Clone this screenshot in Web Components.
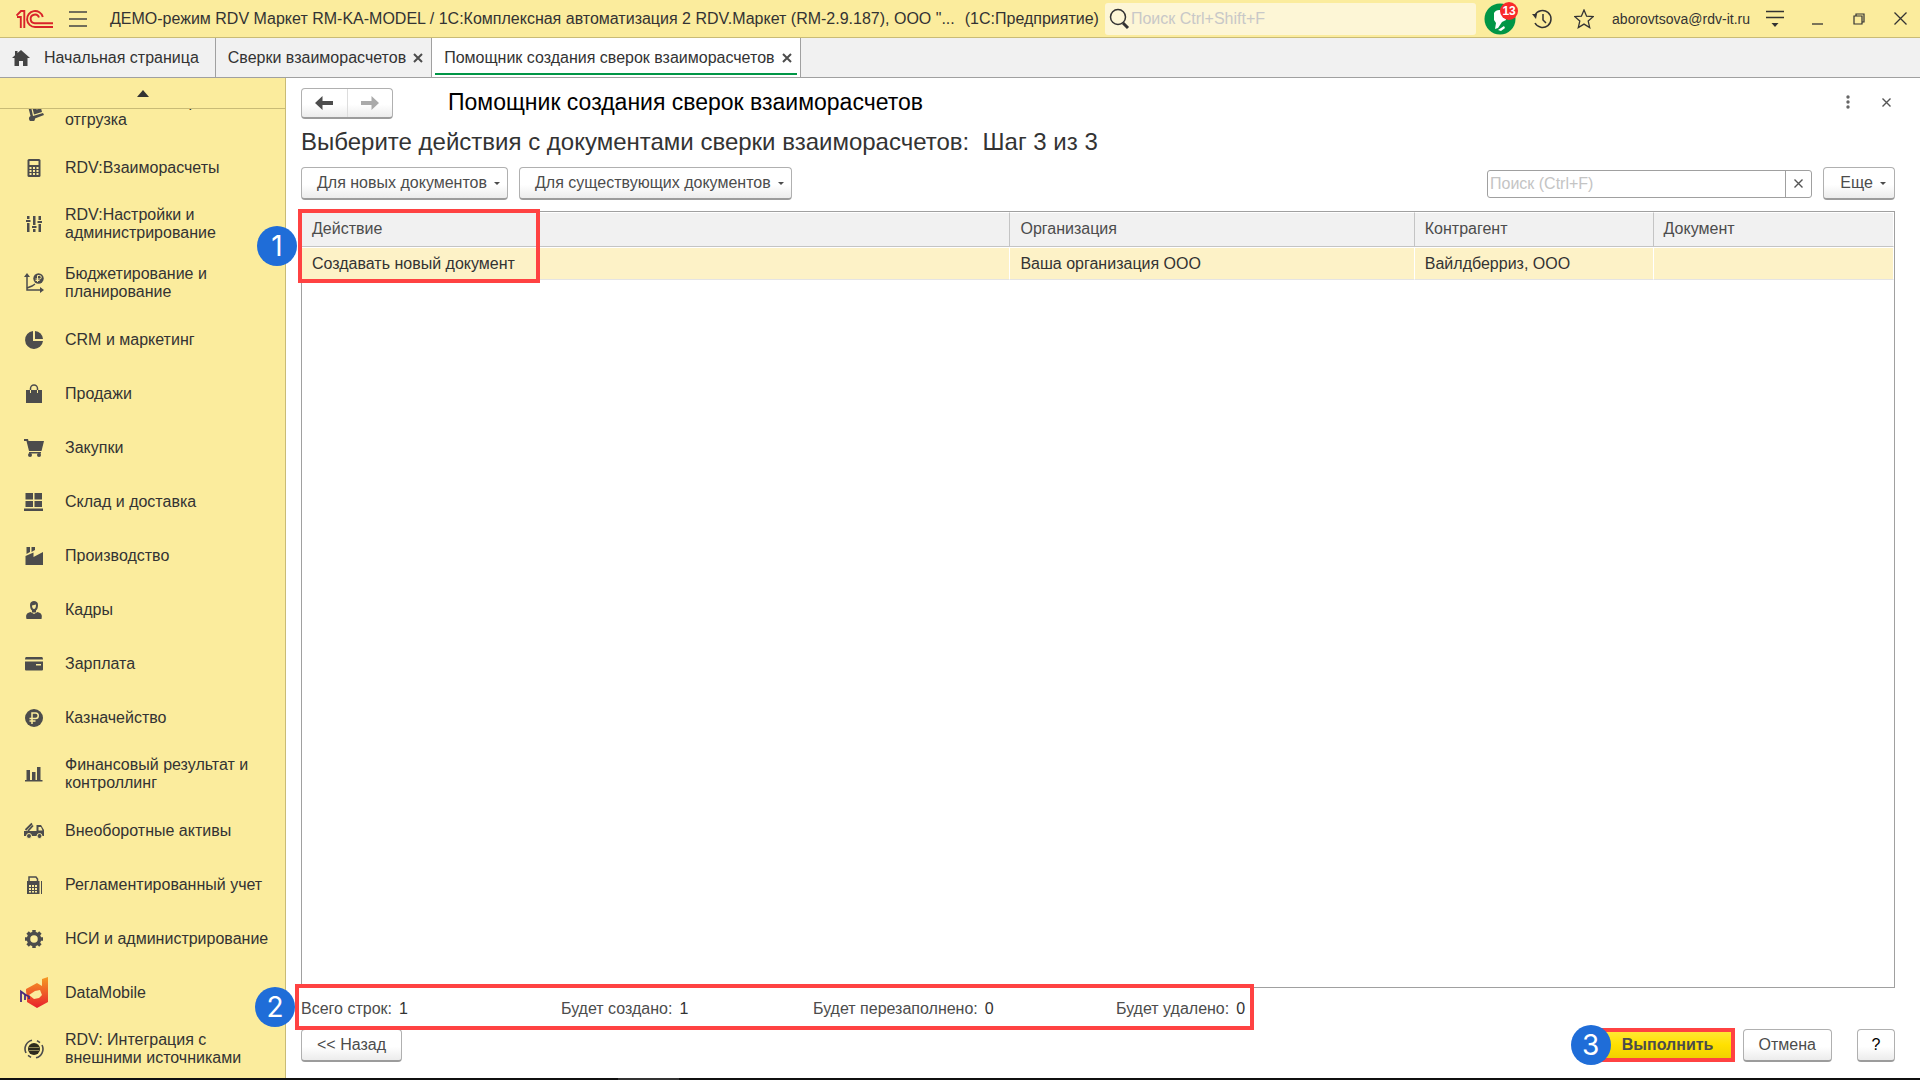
<!DOCTYPE html>
<html lang="ru">
<head>
<meta charset="utf-8">
<title>Помощник создания сверок взаиморасчетов</title>
<style>
  :root {
    --brand: #fbec9d;
    --brand-line: #c9bb76;
    --line: #a0a0a0;
    --text: #333;
    --muted: #4c4c4c;
    --accent: #009646;
    --mark: #ff4242;
    --badge: #1f6dd8;
  }
  * { box-sizing: border-box; }
  body {
    margin: 0;
    height: 100vh;
    display: flex;
    flex-direction: column;
    overflow: hidden;
    background: #fff;
    color: var(--text);
    font: 16px/18px "Liberation Sans", Arial, sans-serif;
  }
  main {
    flex: 1;
    min-height: 0;
    display: flex;
  }
  section-nav { flex: none; }
  reconcile-form { flex: 1; min-width: 0; }
</style>
</head>
<body>
  <app-header>
    <span slot="title">ДЕМО-режим RDV Маркет RM-KA-MODEL / 1С:Комплексная автоматизация 2 RDV.Маркет (RM-2.9.187), ООО "...</span>
    <span slot="product">(1С:Предприятие)</span>
    <span slot="user">aborovtsova@rdv-it.ru</span>
  </app-header>

  <app-tabs>
    <app-tab icon="home">Начальная страница</app-tab>
    <app-tab closable>Сверки взаиморасчетов</app-tab>
    <app-tab closable active>Помощник создания сверок взаиморасчетов</app-tab>
  </app-tabs>

  <main>
    <section-nav>
      <nav-item icon="trolley">RDV:Заказ и сборка отгрузка</nav-item>
      <nav-item icon="calc">RDV:Взаиморасчеты</nav-item>
      <nav-item icon="sliders">RDV:Настройки и администрирование</nav-item>
      <nav-item icon="budget">Бюджетирование и планирование</nav-item>
      <nav-item icon="pie">CRM и маркетинг</nav-item>
      <nav-item icon="bag">Продажи</nav-item>
      <nav-item icon="cart">Закупки</nav-item>
      <nav-item icon="store">Склад и доставка</nav-item>
      <nav-item icon="factory">Производство</nav-item>
      <nav-item icon="person">Кадры</nav-item>
      <nav-item icon="card">Зарплата</nav-item>
      <nav-item icon="ruble">Казначейство</nav-item>
      <nav-item icon="bars">Финансовый результат и контроллинг</nav-item>
      <nav-item icon="truck">Внеоборотные активы</nav-item>
      <nav-item icon="register">Регламентированный учет</nav-item>
      <nav-item icon="gear">НСИ и администрирование</nav-item>
      <nav-item icon="datamobile">DataMobile</nav-item>
      <nav-item icon="sync">RDV: Интеграция с внешними источниками</nav-item>
    </section-nav>
    <reconcile-form></reconcile-form>
  </main>

  <task-strip></task-strip>

<script>
const ICONS = {
  logo: [38, 20, `<g fill="none" stroke="#d9232a" stroke-width="1.900">
    <path d="M.5 6.500 5 2H8.300v17"/><path d="M1 8h3.800v11"/>
    <path d="M26.800 8A8 8 0 1 0 19 18h18"/><path d="M23 8.500A4.300 4.300 0 1 0 19 14.200h18"/></g>`],
  burger: [18, 18, `<path d="M0 2h18M0 9h18M0 16h18" stroke="#444" stroke-width="1.500"/>`],
  search: [22, 24, `<circle cx="9" cy="10" r="7.500" fill="none" stroke="#333" stroke-width="1.500"/><path d="M14 16l5 5" stroke="#333" stroke-width="3"/>`],
  bell: [32, 32, `<circle cx="16" cy="16" r="15.500" fill="#009646"/>
    <path d="M10 10c2-4 8-4 12 0v7l-4 2-4 6-3 1 1-6-2-3z" fill="#fff"/><path d="M14 27l6-4 1 2-4 3z" fill="#fff"/>`],
  history: [20, 20, `<g fill="none" stroke="#333" stroke-width="1.500"><path d="M3 6a8.500 8.500 0 1 1 0 8"/><path d="M11 5v6l3 3"/></g><path d="M0 5l5 0-1 5z" fill="#333"/>`],
  star: [20, 20, `<path d="M10 1l2.600 6.200 6.600.5-5 4.400 1.500 6.500L10 15.100l-5.700 3.500 1.500-6.500-5-4.400 6.600-.5z" fill="none" stroke="#333" stroke-width="1.300"/>`],
  service: [18, 18, `<path d="M0 1.500h18M0 7.500h18" stroke="#333" stroke-width="1.500"/><path d="M5.500 13h7L9 17z" fill="#333"/>`],
  minimize: [12, 12, `<path d="M1 11h11" stroke="#333" stroke-width="1.300"/>`],
  restore: [12, 12, `<g fill="none" stroke="#333" stroke-width="1.200"><path d="M1 3h8v8H1z"/><path d="M3 3V1h8v8H9"/></g>`],
  quit: [13, 13, `<path d="M.5.5l12 12M12.500.5l-12 12" stroke="#333" stroke-width="1.300"/>`],
  home: [18, 16, `<path d="M9 0l9 8h-2.500v8H11v-5H7v5H2.500V8H0l3-2.700V1h2.500v2z" fill="#444"/>`],
  close: [10, 10, `<path d="M1 1l8 8M9 1l-8 8" stroke="#4c4c4c" stroke-width="2"/>`],
  thin: [9, 9, `<path d="M.5.5l8 8M8.500.5l-8 8" stroke="#555" stroke-width="1.400"/>`],
  up: [12, 7, `<path d="M6 0l6 7H0z" fill="#333"/>`],
  caret: [6, 3, `<path d="M0 0h6L3 3z" fill="#4c4c4c"/>`],
  dots: [4, 14, `<g fill="#666"><circle cx="2" cy="2" r="1.700"/><circle cx="2" cy="7" r="1.700"/><circle cx="2" cy="12" r="1.700"/></g>`],
  back: [18, 14, `<path d="M7.500 0v5H18v4H7.500v5L0 7z" fill="#4c4c4c"/>`],
  forward: [18, 14, `<path d="M10.500 0v5H0v4h10.500v5L18 7z" fill="#aaa"/>`],

  trolley: [20, 20, `<path d="M3 1h3l3 14 10-3 1 2-9 3.500a3 3 0 1 1-4.500-2.500z" fill="#4c4c4c"/><path d="M8 5l8-2 2 8-8 2.500z" fill="#4c4c4c"/><path d="M11.500 4.500l1 4 2-.5-1-4" fill="#fbec9d"/>`],
  calc: [20, 20, `<path d="M5 1h10a1.500 1.500 0 0 1 1.500 1.500v15A1.500 1.500 0 0 1 15 19H5a1.500 1.500 0 0 1-1.500-1.500v-15A1.500 1.500 0 0 1 5 1z" fill="#4c4c4c"/>
    <path d="M5.500 3h9v4h-9zM5.500 9h2v2h-2zM9 9h2v2H9zM12.500 9h2v2h-2zM5.500 12h2v2h-2zM9 12h2v2H9zM12.500 12h2v2h-2zM5.500 15h2v2h-2zM9 15h2v2H9zM12.500 15h2v2h-2z" fill="#fbec9d"/>`],
  sliders: [20, 20, `<path d="M3 2h2.500v3H3zM3 9h2.500v9H3zM2 6h4.500v2H2zM9 2h2.500v9H9zM9 15h2.500v3H9zM8 12h4.500v2H8zM14.500 2H17v4h-2.500zM14.500 10H17v8h-2.500zM13.500 7H18v2h-4.500z" fill="#4c4c4c"/>`],
  budget: [20, 20, `<g fill="none" stroke="#4c4c4c" stroke-width="1.500"><path d="M3 2v15h15"/><path d="M3 15l5-2 3-2"/></g>
    <circle cx="14.500" cy="5.500" r="5.200" fill="#4c4c4c"/><path d="M13.500 9V2.500h2a1.600 1.600 0 0 1 0 3.500h-4M11.500 7.500h4" fill="none" stroke="#fbec9d"/>
    <path d="M0 4l3-4 3 4zM16 14l4 3-4 3z" fill="#4c4c4c"/>`],
  pie: [20, 20, `<path d="M9 1v10h10A9 9 0 1 1 9 1z" fill="#4c4c4c"/><path d="M11 1a8.500 8.500 0 0 1 8 8h-8z" fill="#4c4c4c"/>`],
  bag: [20, 20, `<path d="M2 6h16v13H2z" fill="#4c4c4c"/><path d="M6.500 9V4.500a3.500 3.500 0 0 1 7 0V9" fill="none" stroke="#4c4c4c" stroke-width="1.500"/>
    <path d="M6.500 6v3M13.500 6v3" stroke="#fbec9d"/>`],
  cart: [20, 20, `<path d="M0 1h4l.5 2H20l-2.500 10H5L2.500 3H0zM5 14h12v1.500H5z" fill="#4c4c4c"/><circle cx="6" cy="17" r="2" fill="#4c4c4c"/><circle cx="15" cy="17" r="2" fill="#4c4c4c"/>`],
  store: [20, 20, `<path d="M1.500 1H9v6.500H1.500zM10.500 1H18v6.500h-7.500zM1.500 9H9v6H1.500zM10.500 9H18v6h-7.500zM0 16.500h19V19H0z" fill="#4c4c4c"/>`],
  factory: [20, 20, `<path d="M1.500 10l8-3.500V11L19 6v13H1.500z" fill="#4c4c4c"/><path d="M2.500 1h3.500v5l-3.500 2zM7.500 1H11v3l-3.500 2z" fill="#4c4c4c"/>`],
  person: [20, 20, `<path d="M6 5C6 2 8 1 10 1s4 1 4 4-1 5-2 5.500v2H8v-2C7 10 6 8 6 5z" fill="#4c4c4c"/><path d="M8 5.500l4-1c0 3.500-1 4.500-2 4.500s-2-1-2-3.500z" fill="#fbec9d"/>
    <path d="M2.500 19c-1-4 0-6 4-7l3.500 2 3.500-2c4 1 5 3 4 7z" fill="#4c4c4c"/>`],
  card: [20, 20, `<path d="M2 3h16q1 0 1 2.500H1Q1 3 2 3zM1 7.500h18v8q0 1-1 1H2q-1 0-1-1z" fill="#4c4c4c"/><path d="M12 10h5v1.500h-5z" fill="#fbec9d"/>`],
  ruble: [20, 20, `<circle cx="10" cy="10" r="9" fill="#4c4c4c"/><path d="M8 16V5h3.500a2.700 2.700 0 0 1 0 5.500H5.500M5.500 13h6" fill="none" stroke="#fbec9d" stroke-width="1.500"/>`],
  bars: [20, 20, `<path d="M2.500 6H6v10H2.500zM8 8h3.500v8H8zM13 3h3.500v13H13zM1 16h17.500v1.500H1z" fill="#4c4c4c"/>`],
  truck: [20, 20, `<g fill="#4c4c4c"><path d="M0 10h20v5H0z"/><path d="M12.500 4H17l3 5v2h-7.500z"/></g>
    <path d="M1.500 9L8 2.500M4 10l5-5.500" stroke="#4c4c4c" stroke-width="1.800"/><path d="M14.500 6H17l1.500 3.500h-4z" fill="#fbec9d"/>
    <g fill="#4c4c4c" stroke="#fbec9d"><circle cx="5" cy="15" r="2.500"/><circle cx="15.500" cy="15" r="2.500"/></g>`],
  register: [20, 20, `<path d="M3 6h12.500v13H3z" fill="#4c4c4c"/><path d="M5 6V2h7l1.500 2v2" fill="none" stroke="#4c4c4c" stroke-width="1.500"/><path d="M17.500 6v13" stroke="#4c4c4c"/>
    <path d="M5 10h2v2H5zM8 10h2v2H8zM11 10h2v2h-2zM5 13h2v2H5zM8 13h2v2H8zM11 13h2v2h-2zM5 16h2v1.500H5zM8 16h2v1.500H8zM11 16h2v1.500h-2z" fill="#fbec9d"/>`],
  gear: [20, 20, `<circle cx="10" cy="10" r="5.500" fill="none" stroke="#4c4c4c" stroke-width="3.500"/>
    <path d="M10 1v3M10 16v3M1 10h3M16 10h3M3.600 3.600l2 2M14.400 14.400l2 2M3.600 16.400l2-2M14.400 5.600l2-2" stroke="#4c4c4c" stroke-width="3.500"/>`],
  datamobile: [28, 32, `<defs><linearGradient id="dm" x1="0" y1="0" x2="0" y2="1"><stop offset="0" stop-color="#f59a23"/><stop offset="1" stop-color="#e8202c"/></linearGradient></defs>
    <path fill-rule="evenodd" d="M22 2l6-2v25l-11 6-10-6v-3l-1-8V12l11-6 5 3zM9 18l5 4 5-1 3-3-2-5-5 1z" fill="url(#dm)"/>
    <path d="M1 25V14.500l4 3V23M5 17.500l4 2V22" fill="none" stroke="#4b2a7b" stroke-width="1.800"/>`],
  sync: [20, 20, `<circle cx="10" cy="10" r="6" fill="#2d2a1e"/><path d="M5 8.500h10M5 11.500h10" stroke="#8f8757"/>
    <path d="M8 1.200A9 9 0 0 0 2 14M12 18.800A9 9 0 0 0 18 6M13 1.700l3 2M7 18.300l-3-2" fill="none" stroke="#4c4c4c" stroke-width="1.600"/>`]
}

class AppIcon extends HTMLElement {
  constructor() {
    super()
    this.attachShadow({ mode: 'open' })
  }
  connectedCallback() {
    const [w, h, body] = ICONS[this.getAttribute('name')]
    this.shadowRoot.innerHTML = `
      <style>
        :host { display: inline-flex; flex: none; }
        svg { display: block; }
      </style>
      <svg width="${w}" height="${h}" viewBox="0 0 ${w} ${h}" aria-hidden="true">${body}</svg>
    `
  }
}
customElements.define('app-icon', AppIcon)

class AppHeader extends HTMLElement {
  constructor() {
    super()
    this.attachShadow({ mode: 'open' })
    this.shadowRoot.innerHTML = `
      <style>
        :host {
          display: flex;
          align-items: center;
          flex: none;
          height: 38px;
          padding-left: 16px;
          box-sizing: border-box;
          background: var(--brand);
          border-bottom: 1px solid var(--brand-line);
          white-space: nowrap;
        }
        button {
          flex: none;
          display: flex;
          align-items: center;
          justify-content: center;
          width: 42px;
          height: 32px;
          padding: 0;
          border: none;
          background: none;
          font: inherit;
          color: inherit;
        }
        .menu { width: 18px; margin: 0 23px 0 15px; }
        .product { margin-left: 10px; }
        .find {
          flex: 1;
          display: flex;
          align-items: center;
          height: 32px;
          margin: 0 8px 0 6px;
          padding-left: 4px;
          box-sizing: border-box;
          border-radius: 3px;
          background: #fdf6d6;
        }
        input {
          flex: 1;
          min-width: 0;
          padding: 0;
          border: none;
          outline: none;
          background: none;
          font: inherit;
        }
        input::placeholder { color: #c8c8c8; opacity: 1; }
        .bell { position: relative; width: 32px; margin-right: 5px; }
        .count {
          position: absolute;
          top: -1px;
          right: -2px;
          width: 18px;
          height: 18px;
          border-radius: 9px;
          background: #f92a2a;
          color: #fff;
          font: bold 12px/18px "Liberation Sans", Arial, sans-serif;
          text-align: center;
        }
        .user { width: auto; margin: 0 4px 0 7px; font-size: 14px; }
        .quit { width: 40px; }
      </style>
      <app-icon name="logo"></app-icon>
      <button class="menu" aria-label="Главное меню"><app-icon name="burger"></app-icon></button>
      <slot name="title"></slot>
      <span class="product"><slot name="product"></slot></span>
      <label class="find">
        <app-icon name="search"></app-icon>
        <input type="text" placeholder="Поиск Ctrl+Shift+F" aria-label="Поиск">
      </label>
      <button class="bell" aria-label="Уведомления"><app-icon name="bell"></app-icon><span class="count">13</span></button>
      <button aria-label="История"><app-icon name="history"></app-icon></button>
      <button aria-label="Избранное"><app-icon name="star"></app-icon></button>
      <button class="user"><slot name="user"></slot></button>
      <button aria-label="Сервис"><app-icon name="service"></app-icon></button>
      <button aria-label="Свернуть"><app-icon name="minimize"></app-icon></button>
      <button aria-label="Развернуть"><app-icon name="restore"></app-icon></button>
      <button class="quit" aria-label="Закрыть"><app-icon name="quit"></app-icon></button>
    `
  }
}
customElements.define('app-header', AppHeader)

class AppTabs extends HTMLElement {
  constructor() {
    super()
    this.attachShadow({ mode: 'open' })
    this.shadowRoot.innerHTML = `
      <style>
        :host {
          display: flex;
          flex: none;
          height: 40px;
          box-sizing: border-box;
          background: #f1f1f1;
          border-bottom: 1px solid var(--line);
        }
      </style>
      <slot></slot>
    `
  }
}
customElements.define('app-tabs', AppTabs)

class AppTab extends HTMLElement {
  constructor() {
    super()
    this.attachShadow({ mode: 'open' })
  }
  connectedCallback() {
    const icon = this.getAttribute('icon')
    this.shadowRoot.innerHTML = `
      <style>
        :host {
          display: flex;
          align-items: center;
          position: relative;
          padding: 0 8px 0 12px;
          border-right: 1px solid var(--line);
        }
        :host([icon]) { padding-right: 16px; }
        :host([active]) { background: #fff; }
        :host([active])::after {
          content: '';
          position: absolute;
          left: 3px;
          right: 3px;
          bottom: 2px;
          height: 2px;
          background: var(--accent);
        }
        button {
          display: flex;
          align-items: center;
          gap: 14px;
          padding: 0;
          border: none;
          background: none;
          font: inherit;
          color: inherit;
          white-space: nowrap;
        }
        .close { padding-left: 7px; }
      </style>
      <button>${icon ? `<app-icon name="${icon}"></app-icon>` : ''}<slot></slot></button>
      ${this.hasAttribute('closable') ? '<button class="close" aria-label="Закрыть"><app-icon name="close"></app-icon></button>' : ''}
    `
  }
}
customElements.define('app-tab', AppTab)

class SectionNav extends HTMLElement {
  constructor() {
    super()
    this.attachShadow({ mode: 'open' })
    this.shadowRoot.innerHTML = `
      <style>
        :host {
          display: flex;
          flex-direction: column;
          width: 286px;
          box-sizing: border-box;
          background: var(--brand);
          border-right: 1px solid var(--brand-line);
        }
        button {
          flex: none;
          display: flex;
          align-items: center;
          justify-content: center;
          height: 31px;
          padding: 0;
          border: none;
          border-bottom: 1px solid var(--brand-line);
          background: none;
        }
        /* scrolled to the end: the last section stays at the bottom edge */
        nav {
          flex: 1;
          min-height: 0;
          display: flex;
          flex-direction: column;
          justify-content: flex-end;
          overflow: hidden;
        }
      </style>
      <button aria-label="Прокрутить вверх"><app-icon name="up"></app-icon></button>
      <nav><slot></slot></nav>
    `
  }
}
customElements.define('section-nav', SectionNav)

class NavItem extends HTMLElement {
  constructor() {
    super()
    this.attachShadow({ mode: 'open' })
  }
  connectedCallback() {
    this.shadowRoot.innerHTML = `
      <style>
        :host { display: block; flex: none; }
        a {
          display: flex;
          align-items: center;
          gap: 17px;
          min-height: 54px;
          padding: 12px 14px 11px 20px;
          box-sizing: border-box;
          color: inherit;
          text-decoration: none;
        }
        .pic {
          flex: none;
          display: flex;
          justify-content: center;
          width: 28px;
          margin: -6px 0;
        }
      </style>
      <a href="#"><span class="pic"><app-icon name="${this.getAttribute('icon')}"></app-icon></span><span><slot></slot></span></a>
    `
  }
}
customElements.define('nav-item', NavItem)

class ToolButton extends HTMLElement {
  constructor() {
    super()
    this.attachShadow({ mode: 'open' })
    this.shadowRoot.innerHTML = `
      <style>
        :host { display: inline-flex; flex: none; height: 33px; }
        button {
          flex: 1;
          display: flex;
          align-items: center;
          justify-content: center;
          gap: 8px;
          padding: 0 15px;
          border: 1px solid #b0b0b0;
          border-bottom: 2px solid #9c9c9c;
          border-radius: 4px;
          background: linear-gradient(#fff 55%, #ececec);
          font: inherit;
          color: var(--muted);
          white-space: nowrap;
        }
        app-icon { display: none; }
        :host([menu]) button { gap: 7px; padding-right: 7px; }
        :host([menu]) app-icon { display: inline-flex; }
        :host([primary]) button {
          border-color: #d8c200 #d8c200 #b0a000;
          background: linear-gradient(#ffe93a, #ffe000 50%, #efcf00);
          font-weight: bold;
        }
        :host([dark]) button { padding: 0; color: #000; }
      </style>
      <button><slot></slot><app-icon name="caret"></app-icon></button>
    `
  }
}
customElements.define('tool-button', ToolButton)

/* red frame with a numbered circle, laid over its container */
class StepMark extends HTMLElement {
  constructor() {
    super()
    this.attachShadow({ mode: 'open' })
  }
  connectedCallback() {
    this.shadowRoot.innerHTML = `
      <style>
        :host { display: block; position: absolute; pointer-events: none; z-index: 2; }
        .frame {
          position: absolute;
          inset: 0;
          border: 4px solid var(--mark);
        }
        .num {
          position: absolute;
          top: 50%;
          right: 100%;
          width: 40px;
          height: 40px;
          margin: -20px var(--overlap, 0) 0 0;
          border-radius: 50%;
          background: var(--badge);
          color: #fff;
          font: 28px/40px Inter, "Liberation Sans", sans-serif;
          text-align: center;
        }
      </style>
      <div class="frame"></div>
      <div class="num">${this.getAttribute('number')}</div>
    `
  }
}
customElements.define('step-mark', StepMark)

class DataGrid extends HTMLElement {
  constructor() {
    super()
    this.attachShadow({ mode: 'open' })
    this.shadowRoot.innerHTML = `
      <style>
        :host {
          display: block;
          position: relative;
          box-sizing: border-box;
          border: 1px solid var(--line);
        }
        table {
          width: 100%;
          table-layout: fixed;
          border-collapse: separate;
          border-spacing: 0;
        }
        th, td {
          padding: 0 10px;
          text-align: left;
          font-weight: normal;
          border: 1px solid #fff;
          border-left-width: 0;
        }
        th {
          height: 35px;
          padding-bottom: 2px;
          box-sizing: border-box;
          background: #f1f1f1;
          border-right-color: #c4c4c4;
          border-bottom-color: #c4c4c4;
          color: var(--muted);
        }
        td {
          height: 33px;
          box-sizing: border-box;
          background: #fdf2c7;
          border-bottom-color: #e4e4e4;
        }
        th:last-child, td:last-child { border-right-color: #fff; }
      </style>
      <table>
        <colgroup><col style="width:44.500%"><col style="width:25.400%"><col style="width:15%"><col></colgroup>
        <thead><tr><th>Действие</th><th>Организация</th><th>Контрагент</th><th>Документ</th></tr></thead>
        <tbody><tr><td>Создавать новый документ</td><td>Ваша организация ООО</td><td>Вайлдберриз, ООО</td><td></td></tr></tbody>
      </table>
      <slot></slot>
    `
  }
}
customElements.define('data-grid', DataGrid)

class ReconcileForm extends HTMLElement {
  constructor() {
    super()
    this.attachShadow({ mode: 'open' })
    this.shadowRoot.innerHTML = `
      <style>
        :host {
          display: flex;
          flex-direction: column;
          box-sizing: border-box;
          padding: 10px 25px 16px 15px;
        }
        h1, h2 { margin: 0; font-weight: normal; }
        h1 { flex: 1; font-size: 23px; line-height: 29px; color: #000; }
        h2 { margin: 8px 0 10px; font-size: 24px; line-height: 30px; white-space: pre; }
        .row { display: flex; align-items: center; flex: none; }
        .head { align-items: flex-start; }
        .plain {
          display: flex;
          align-items: center;
          justify-content: center;
          padding: 0;
          border: none;
          background: none;
        }
        .history {
          display: flex;
          width: 92px;
          height: 31px;
          margin-right: 55px;
          box-sizing: border-box;
          border: 1px solid #b0b0b0;
          border-bottom: 2px solid #9c9c9c;
          border-radius: 4px;
          background: linear-gradient(#fff 55%, #ececec);
        }
        .history button { flex: 1; }
        .history button + button { border-left: 1px solid #ddd; }
        .more, .shut { height: 28px; }
        .more { margin-right: 32px; }
        .shut { margin-right: 4px; }
        .tools { gap: 11px; }
        .tools tool-button:last-child { width: 72px; }
        .find {
          display: flex;
          width: 325px;
          height: 28px;
          margin-left: auto;
          box-sizing: border-box;
          border: 1px solid var(--line);
          border-radius: 3px;
        }
        .find input {
          flex: 1;
          min-width: 0;
          padding: 0 2px;
          border: none;
          outline: none;
          background: none;
          font: inherit;
        }
        .find input::placeholder { color: #c4c4c4; opacity: 1; }
        .find button {
          width: 26px;
          border-left: 1px solid var(--line);
        }
        data-grid { flex: 1; min-height: 0; margin-top: 11px; }
        data-grid step-mark { top: -3px; left: -4px; width: 242px; height: 74px; --overlap: 1px; }
        dl {
          position: relative;
          display: grid;
          grid-template-columns: 260px 252px 303px max-content;
          align-items: center;
          width: max-content;
          height: 41px;
          margin: 0;
          color: var(--muted);
        }
        dl div { display: flex; gap: 7px; }
        dd { margin: 0; color: var(--text); }
        dl step-mark { top: -4px; bottom: -1px; left: -6px; right: -9px; }
        .actions { gap: 8px; }
        .run { position: relative; display: flex; margin-left: auto; }
        .run tool-button { width: 134px; }
        .run step-mark { inset: -1px 0 0 0; --overlap: -10px; }
        .help { width: 38px; margin-left: 17px; }
      </style>
      <div class="row head">
        <div class="history">
          <button class="plain" aria-label="Назад"><app-icon name="back"></app-icon></button>
          <button class="plain" aria-label="Вперед"><app-icon name="forward"></app-icon></button>
        </div>
        <h1>Помощник создания сверок взаиморасчетов</h1>
        <button class="plain more" aria-label="Дополнительно"><app-icon name="dots"></app-icon></button>
        <button class="plain shut" aria-label="Закрыть"><app-icon name="thin"></app-icon></button>
      </div>
      <h2>Выберите действия с документами сверки взаиморасчетов:  Шаг 3 из 3</h2>
      <div class="row tools">
        <tool-button menu>Для новых документов</tool-button>
        <tool-button menu>Для существующих документов</tool-button>
        <div class="find">
          <input type="text" placeholder="Поиск (Ctrl+F)" aria-label="Поиск в списке">
          <button class="plain" aria-label="Очистить"><app-icon name="thin"></app-icon></button>
        </div>
        <tool-button menu>Еще</tool-button>
      </div>
      <data-grid><step-mark number="1"></step-mark></data-grid>
      <dl>
        <div><dt>Всего строк:</dt><dd>1</dd></div>
        <div><dt>Будет создано:</dt><dd>1</dd></div>
        <div><dt>Будет перезаполнено:</dt><dd>0</dd></div>
        <div><dt>Будет удалено:</dt><dd>0</dd></div>
        <step-mark number="2"></step-mark>
      </dl>
      <div class="row actions">
        <tool-button>&lt;&lt; Назад</tool-button>
        <div class="run">
          <tool-button primary>Выполнить</tool-button>
          <step-mark number="3"></step-mark>
        </div>
        <tool-button>Отмена</tool-button>
        <tool-button class="help" dark>?</tool-button>
      </div>
    `
  }
}
customElements.define('reconcile-form', ReconcileForm)

class TaskStrip extends HTMLElement {
  constructor() {
    super()
    this.attachShadow({ mode: 'open' })
    this.shadowRoot.innerHTML = `
      <style>
        :host { display: block; flex: none; height: 2px; background: #101010; }
        div { width: 61px; height: 2px; margin-left: 618px; background: #333; }
      </style>
      <div></div>
    `
  }
}
customElements.define('task-strip', TaskStrip)
</script>
</body>
</html>
